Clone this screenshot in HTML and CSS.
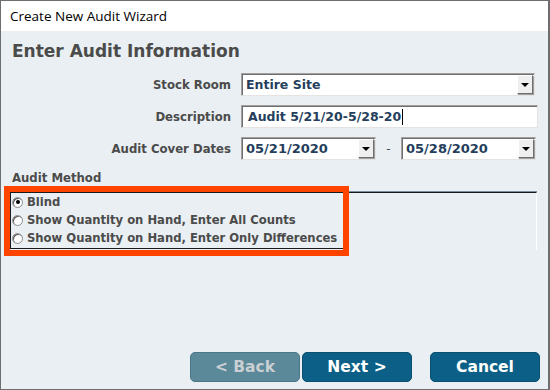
FILE: index.html
```html
<!DOCTYPE html>
<html lang="en">
<head>
    <meta charset="UTF-8">
    <meta name="viewport" content="width=device-width, initial-scale=1.0">
    <title>Create New Audit Wizard</title>
    <link rel="stylesheet" href="styles.css">
</head>
<body>
    <div class="window">
        <div class="titlebar">Create New Audit Wizard</div>
        <div class="content">
            <h1 class="heading">Enter Audit Information</h1>

            <div class="form">
                <label class="label">Stock Room</label>
                <div class="field combo">
                    <span class="combo-text">Entire Site</span>
                    <span class="drop-btn"></span>
                </div>

                <label class="label">Description</label>
                <div class="field textbox">
                    <span>Audit 5/21/20-5/28-20</span><span class="caret"></span>
                </div>

                <label class="label">Audit Cover Dates</label>
                <div class="dates">
                    <div class="field combo date">
                        <span class="combo-text">05/21/2020</span>
                        <span class="drop-btn"></span>
                    </div>
                    <span class="dash">-</span>
                    <div class="field combo date">
                        <span class="combo-text">05/28/2020</span>
                        <span class="drop-btn"></span>
                    </div>
                </div>
            </div>

            <div class="method-title">Audit Method</div>
            <div class="method-group">
                <div class="radio-list">
                    <div class="radio-row"><span class="radio checked"></span>Blind</div>
                    <div class="radio-row"><span class="radio"></span>Show Quantity on Hand, Enter All Counts</div>
                    <div class="radio-row"><span class="radio"></span>Show Quantity on Hand, Enter Only Differences</div>
                </div>
                <div class="highlight"></div>
            </div>

            <div class="buttons">
                <button class="btn" disabled>&lt; Back</button>
                <button class="btn">Next &gt;</button>
                <button class="btn cancel">Cancel</button>
            </div>
        </div>
    </div>
</body>
</html>
```

FILE: styles.css
```css
* {
    padding: 0;
    margin: 0;
    box-sizing: border-box;
}
body {
    font-family: "DejaVu Sans", Verdana, sans-serif;
    background: #ffffff;
}
.window {
    width: 550px;
    height: 390px;
    border: 1px solid #6e6e6e;
    border-right-width: 2px;
    display: flex;
    flex-direction: column;
}
.titlebar {
    height: 30px;
    background: #ffffff;
    font-family: "Open Sans", "Noto Sans", sans-serif;
    font-size: 13.5px;
    color: #000;
    padding: 6px 0 0 9px;
}
.content {
    flex: 1;
    background: #e9eff2;
    display: flex;
    flex-direction: column;
}
.heading {
    font-size: 17px;
    font-weight: bold;
    color: #4b4b4b;
    padding: 10px 0 0 11px;
    height: 42px;
}
.form {
    display: grid;
    grid-template-columns: 219px 296px;
    column-gap: 10px;
    row-gap: 9px;
    padding-left: 11px;
    align-items: center;
}
.label {
    text-align: right;
    font-size: 11.7px;
    font-weight: bold;
    color: #4b4b4b;
}
.field {
    height: 23px;
    background: #ffffff;
    border: 1px solid #e3e3e3;
    border-top-color: #a0a0a0;
    border-left-color: #a0a0a0;
    box-shadow: inset 1px 1px 0 #6f6f6f;
    font-size: 12.5px;
    font-weight: bold;
    color: #243e5c;
    display: flex;
    align-items: center;
    padding-left: 4px;
}
.combo {
    width: 294px;
    justify-content: space-between;
}
.textbox {
    width: 297px;
    padding-left: 6px;
}
.caret {
    width: 1px;
    height: 16px;
    background: #000;
    margin-left: 1px;
}
.drop-btn {
    width: 16px;
    height: 19px;
    margin-right: 1px;
    background: #efefef;
    border: 1px solid #ffffff;
    border-right-color: #6f6f6f;
    border-bottom-color: #6f6f6f;
    box-shadow: 1px 1px 0 #a0a0a0;
    display: flex;
    align-items: center;
    justify-content: center;
}
.drop-btn::after {
    content: "";
    border-left: 4px solid transparent;
    border-right: 4px solid transparent;
    border-top: 4px solid #000;
}
.dates {
    display: flex;
    align-items: center;
}
.date {
    width: 135px;
    font-size: 13px;
}
.dash {
    width: 25px;
    text-align: center;
    font-size: 12px;
    color: #4b4b4b;
}
.method-title {
    font-size: 11.7px;
    font-weight: bold;
    color: #4b4b4b;
    padding: 11px 0 0 11px;
    height: 32px;
}
.method-group {
    position: relative;
    margin-left: 8px;
    width: 528px;
    height: 58px;
    border-top: 1px solid #1a1a1a;
    border-right: 1px solid #ffffff;
    box-shadow: 0 -1px 0 #7f8c99;
}
.radio-list {
    width: 333px;
    height: 56px;
    margin-left: 1px;
    border-left: 1px solid #1a1a1a;
    border-bottom: 1px solid #1a1a1a;
    padding: 0 0 0 1px;
}
.radio-row {
    display: flex;
    align-items: center;
    height: 18px;
    font-size: 11.6px;
    font-weight: bold;
    color: #4b4b4b;
    white-space: nowrap;
}
.radio {
    width: 11px;
    height: 11px;
    flex-shrink: 0;
    border-radius: 50%;
    background: #ffffff;
    border: 1px solid #8a8a8a;
    box-shadow: inset 1px 1px 0 #5a5a5a;
    margin-right: 4px;
    display: flex;
    align-items: center;
    justify-content: center;
}
.radio.checked::after {
    content: "";
    width: 4px;
    height: 4px;
    border-radius: 50%;
    background: #000;
}
.highlight {
    position: absolute;
    left: -5px;
    top: -7px;
    width: 345px;
    height: 70px;
    border: 6px solid #ff4400;
}
.buttons {
    margin-top: auto;
    display: flex;
    justify-content: flex-end;
    gap: 2px;
    padding: 0 8px 7px 0;
}
.btn {
    width: 110px;
    height: 30px;
    border: 1px solid #0a4f70;
    border-radius: 5px;
    background: #0c5f86;
    color: #ffffff;
    font-family: "DejaVu Sans", Verdana, sans-serif;
    font-size: 15.5px;
    font-weight: bold;
}
.btn:disabled {
    background: #5b8999;
    border-color: #4a7788;
    color: #c9cfd2;
}
.cancel {
    margin-left: 16px;
}
```
